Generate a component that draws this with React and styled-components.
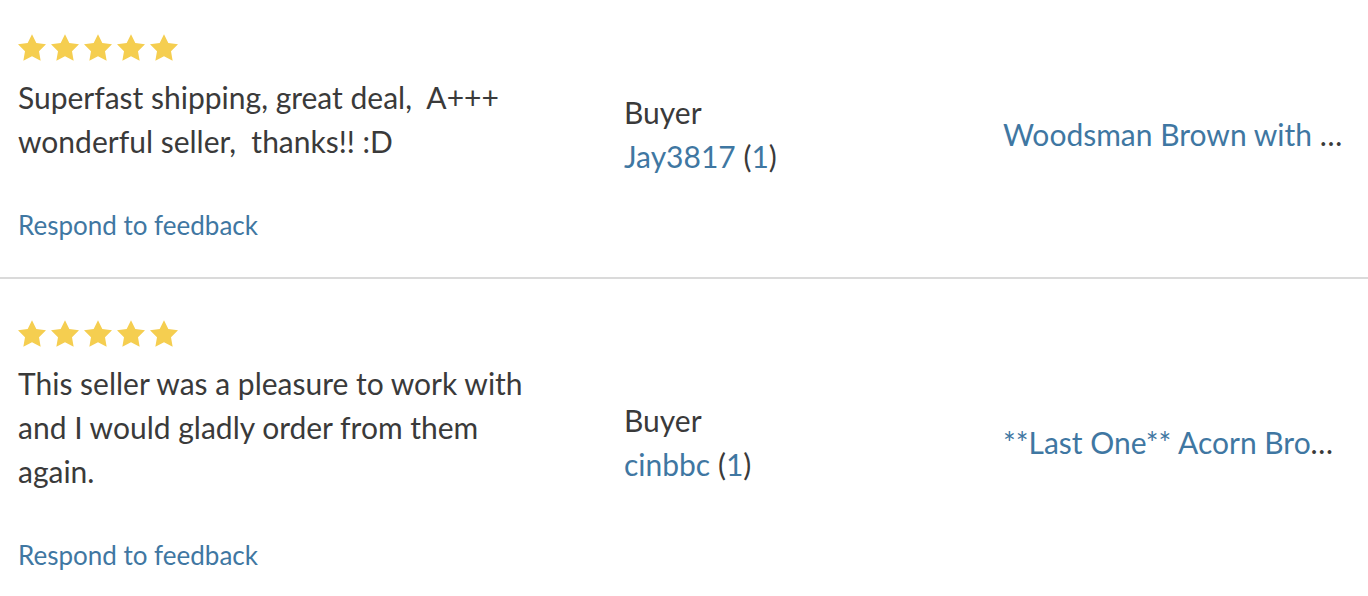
import React from "react";
import styled, { createGlobalStyle } from "styled-components";

const GlobalStyle = createGlobalStyle`
  body {
    margin: 0;
    background: #ffffff;
    font-family: Lato, "Open Sans", sans-serif;
    color: #3a3a3a;
  }
`;

const feedback = [
  {
    comment: "Superfast shipping, great deal,\u00a0 A+++ wonderful seller,\u00a0 thanks!! :D",
    buyer: "Jay3817",
    count: 1,
    item: "Woodsman Brown with Leather Trim Guitar Strap",
  },
  {
    comment:
      "This seller was a pleasure to work with and I would gladly order from them again.",
    buyer: "cinbbc",
    count: 1,
    item: "**Last One** Acorn Brown Leather Guitar Strap",
  },
];

function Star() {
  return (
    <StarIcon viewBox="2 2 20 19.1">
      <path d="M12 2l3.09 6.26L22 9.27l-5 4.87 1.18 6.88L12 17.77l-6.18 3.25L7 14.14 2 9.27l6.91-1.01L12 2z" />
    </StarIcon>
  );
}

export default function App() {
  return (
    <>
      <GlobalStyle />
      <List>
        {feedback.map((entry, index) => (
          <Row key={index} first={index === 0}>
            <Review>
              <Stars>
                {[0, 1, 2, 3, 4].map((i) => (
                  <Star key={i} />
                ))}
              </Stars>
              <Comment>{entry.comment}</Comment>
              <Respond href="#">Respond to feedback</Respond>
            </Review>
            <BuyerInfo>
              <Role>Buyer</Role>
              <div>
                <Link href="#">{entry.buyer}</Link> (
                <Link href="#">{entry.count}</Link>)
              </div>
            </BuyerInfo>
            <Item>
              <Link href="#">{entry.item}</Link>
            </Item>
          </Row>
        ))}
      </List>
    </>
  );
}

const List = styled.div`
  display: flex;
  flex-direction: column;
`;

const Row = styled.div`
  display: grid;
  grid-template-columns: 606px 379px 1fr;
  align-items: center;
  padding: ${(p) => (p.first ? "34px" : "41px")} 20px 34px 18px;
  border-bottom: 2px solid #dadada;
`;

const Review = styled.div`
  display: flex;
  flex-direction: column;
  align-items: flex-start;
`;

const Stars = styled.div`
  display: flex;
  gap: 5px;
  margin-bottom: 14px;
`;

const StarIcon = styled.svg`
  width: 28px;
  height: 27px;
  fill: #f5ce50;
  display: block;
`;

const Comment = styled.div`
  font-size: 30px;
  line-height: 44px;
  color: #3a3a3a;
  max-width: 530px;
`;

const Link = styled.a`
  color: #3f77a2;
  text-decoration: none;
`;

const Respond = styled(Link)`
  font-size: 26px;
  line-height: 36px;
  margin-top: 44px;
`;

const BuyerInfo = styled.div`
  font-size: 30px;
  line-height: 44px;
  color: #3a3a3a;
  margin-bottom: 10px;
`;

const Role = styled.div``;

const Item = styled.div`
  font-size: 30px;
  line-height: 44px;
  color: #3a3a3a;
  white-space: nowrap;
  overflow: hidden;
  text-overflow: ellipsis;
  margin-bottom: 10px;
`;
